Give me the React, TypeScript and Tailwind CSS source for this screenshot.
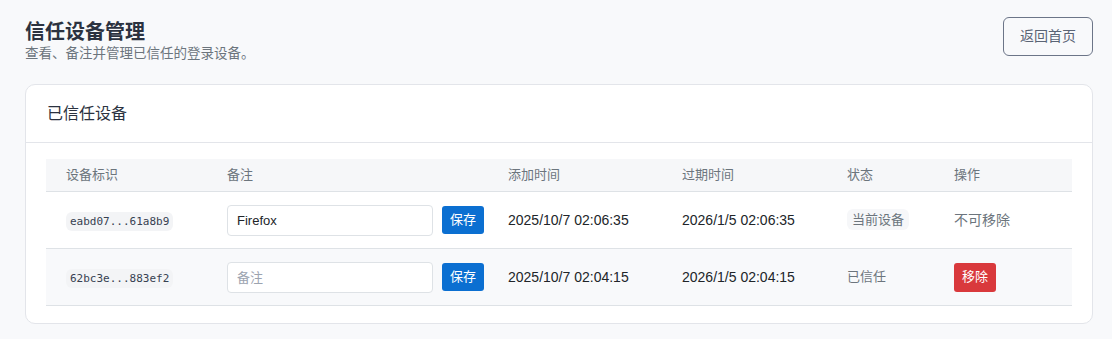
import React from 'react';

type Device = {
    id: string;
    note: string;
    added: string;
    expires: string;
    current: boolean;
};

const DEVICES: Device[] = [
    { id: 'eabd07...61a8b9', note: 'Firefox', added: '2025/10/7 02:06:35', expires: '2026/1/5 02:06:35', current: true },
    { id: '62bc3e...883ef2', note: '', added: '2025/10/7 02:04:15', expires: '2026/1/5 02:04:15', current: false },
];

const cols = 'grid grid-cols-[161px_281px_174px_165px_107px_1fr]';

const App: React.FC = () => {
    return (
        <div
            className="min-h-[339px] bg-[#f8f9fb] pl-[25px] pr-[19px] pt-[17px] pb-4 text-[#212529]"
            style={{ fontFamily: '"Liberation Sans", "Noto Sans CJK SC", sans-serif' }}
        >
            {/* Header */}
            <div className="flex items-start justify-between">
                <div className="pt-[2px]">
                    <h1 className="text-[20px] font-bold leading-[26px] text-[#2b3240]">信任设备管理</h1>
                    <p className="text-[13.5px] leading-[17px] text-[#6c757d]">查看、备注并管理已信任的登录设备。</p>
                </div>
                <button className="h-[39px] w-[90px] rounded-[6px] border border-[#6c7588] text-[14px] text-[#5a6475]">
                    返回首页
                </button>
            </div>

            {/* Card */}
            <div className="mt-[22px] rounded-[10px] border border-[#e3e5ea] bg-white">
                <div className="border-b border-[#e3e5ea] px-[21px] pt-[17px] pb-[16px] text-[16px] leading-[24px] text-[#2b3240]">
                    已信任设备
                </div>
                <div className="px-[20px] pt-[16px] pb-[17px]">
                    <div className={`${cols} h-[33px] items-center border-b border-[#dee2e6] bg-[#f6f7f9] text-[13px] text-[#6c757d]`}>
                        <div className="pl-[20px]">设备标识</div>
                        <div className="pl-[20px]">备注</div>
                        <div className="pl-[20px]">添加时间</div>
                        <div className="pl-[20px]">过期时间</div>
                        <div className="pl-[20px]">状态</div>
                        <div className="pl-[20px]">操作</div>
                    </div>
                    {DEVICES.map((d, i) => (
                        <div
                            key={d.id}
                            className={`${cols} h-[57px] items-center border-b border-[#dee2e6] text-[14px] ${i % 2 === 1 ? 'bg-[#f8f9fb]' : 'bg-white'}`}
                        >
                            <div className="pl-[20px]">
                                <span
                                    className="rounded-[6px] bg-[#f3f4f6] px-[4px] py-[3px] text-[11px] text-[#374151]"
                                    style={{ fontFamily: '"DejaVu Sans Mono", monospace' }}
                                >
                                    {d.id}
                                </span>
                            </div>
                            <div className="flex items-center gap-[9px] pl-[20px]">
                                <input
                                    type="text"
                                    defaultValue={d.note}
                                    placeholder="备注"
                                    className="h-[31px] w-[206px] rounded-[4px] border border-[#dee2e6] bg-white px-[9px] text-[13px] text-[#212529] outline-none placeholder:text-[#9ca3af]"
                                />
                                <button className="h-[28px] w-[42px] rounded-[3px] bg-[#0b6fd1] text-[13px] text-white">保存</button>
                            </div>
                            <div className="pl-[20px]">{d.added}</div>
                            <div className="pl-[20px]">{d.expires}</div>
                            <div className="pl-[20px] text-[13px] text-[#6c757d]">
                                {d.current ? (
                                    <span className="rounded-[6px] bg-[#f6f7f9] px-[5px] py-[3px]">当前设备</span>
                                ) : (
                                    <span>已信任</span>
                                )}
                            </div>
                            <div className="pl-[20px]">
                                {d.current ? (
                                    <span className="text-[14px] text-[#6c757d]">不可移除</span>
                                ) : (
                                    <button className="h-[29px] w-[42px] rounded-[3px] bg-[#d9393c] text-[13px] text-white">移除</button>
                                )}
                            </div>
                        </div>
                    ))}
                </div>
            </div>
        </div>
    );
};

export default App;
